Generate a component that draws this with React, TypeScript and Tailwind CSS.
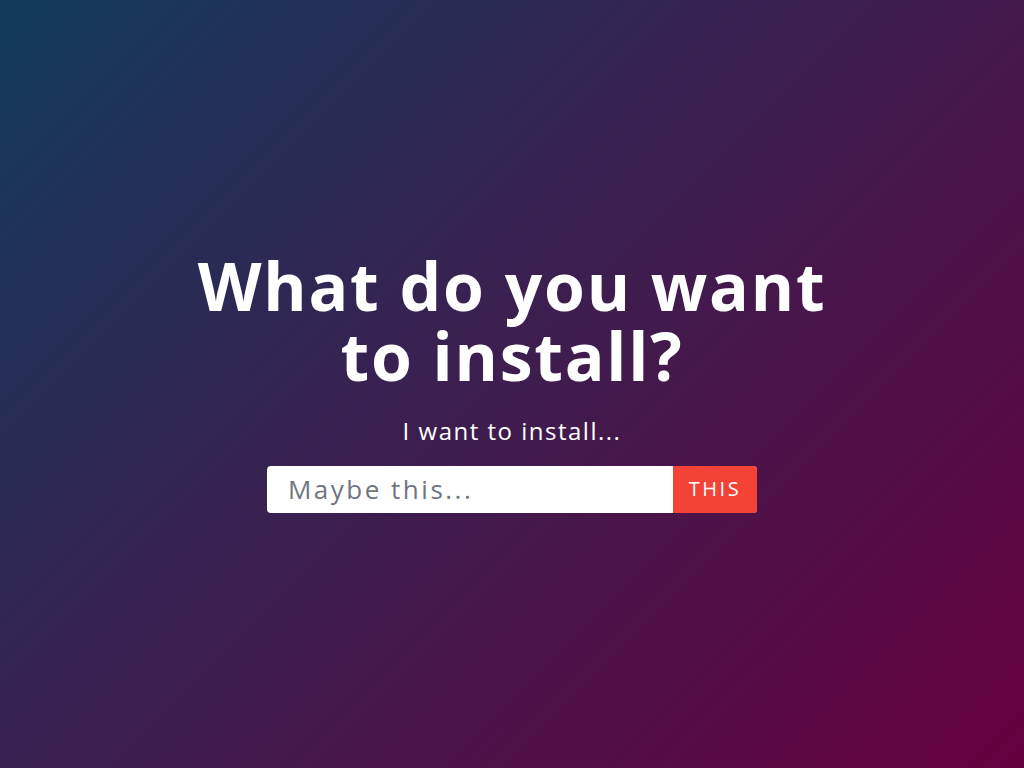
import { useState } from "react";

export default function App() {
  const [query, setQuery] = useState("");

  return (
    <main className="flex min-h-screen w-full flex-col items-center justify-center bg-[linear-gradient(135deg,#113b5b_0%,#3a2050_45%,#66003f_100%)] font-['Open_Sans',sans-serif] text-white">
      <div className="flex flex-col items-center pb-[6px]">
        <h1 className="text-center text-[66px] font-bold leading-[70px] tracking-[1.8px]">
          What do you want
          <br />
          to install?
        </h1>
        <p className="mt-[25px] text-[24px] leading-[32px] tracking-[1.5px]">I want to install...</p>
        <form
          className="mt-[19px] flex h-[47px] w-[490px] overflow-hidden rounded-[4px] bg-white"
          onSubmit={(e) => e.preventDefault()}
        >
          <input
            value={query}
            onChange={(e) => setQuery(e.target.value)}
            placeholder="Maybe this..."
            className="min-w-0 flex-1 px-[21px] text-[26px] tracking-[2.5px] text-gray-700 outline-none placeholder:text-[#6f7580]"
          />
          <button
            type="submit"
            className="w-[84px] bg-[#f44336] text-[20px] tracking-[2.5px] text-white"
          >
            THIS
          </button>
        </form>
      </div>
    </main>
  );
}
